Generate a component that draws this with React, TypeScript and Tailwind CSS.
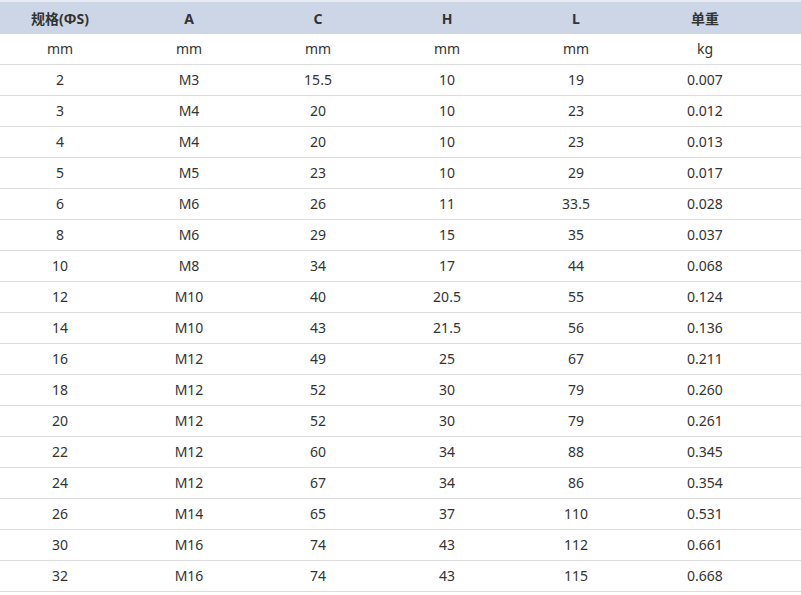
type Row = [string, string, string, string, string, string];

const headers = ["规格(ΦS)", "A", "C", "H", "L", "单重"];

const rows: Row[] = [
  ["mm", "mm", "mm", "mm", "mm", "kg"],
  ["2", "M3", "15.5", "10", "19", "0.007"],
  ["3", "M4", "20", "10", "23", "0.012"],
  ["4", "M4", "20", "10", "23", "0.013"],
  ["5", "M5", "23", "10", "29", "0.017"],
  ["6", "M6", "26", "11", "33.5", "0.028"],
  ["8", "M6", "29", "15", "35", "0.037"],
  ["10", "M8", "34", "17", "44", "0.068"],
  ["12", "M10", "40", "20.5", "55", "0.124"],
  ["14", "M10", "43", "21.5", "56", "0.136"],
  ["16", "M12", "49", "25", "67", "0.211"],
  ["18", "M12", "52", "30", "79", "0.260"],
  ["20", "M12", "52", "30", "79", "0.261"],
  ["22", "M12", "60", "34", "88", "0.345"],
  ["24", "M12", "67", "34", "86", "0.354"],
  ["26", "M14", "65", "37", "110", "0.531"],
  ["30", "M16", "74", "43", "112", "0.661"],
  ["32", "M16", "74", "43", "115", "0.668"],
];

const gridCols = "grid grid-cols-[repeat(6,129px)_1fr]";

export default function App() {
  return (
    <div
      className="h-[595px] w-[801px] overflow-hidden bg-white text-[14px] text-[#333]"
      style={{ fontFamily: '"Noto Sans", "Noto Sans CJK SC", sans-serif' }}
    >
      <div className="h-[2px] bg-[#e8ecf2]" />
      <div className={`${gridCols} h-[32px] items-center bg-[#cdd6e7] font-bold`}>
        {headers.map((h) => (
          <div key={h} className="pr-[9px] text-center">
            {h}
          </div>
        ))}
        <div />
      </div>
      {rows.map((r, i) => (
        <div key={i} className={`${gridCols} h-[31px] items-center border-b border-[#dcdcdc]`}>
          {r.map((c, j) => (
            <div key={j} className="pr-[9px] text-center leading-none">
              {c}
            </div>
          ))}
          <div />
        </div>
      ))}
    </div>
  );
}
